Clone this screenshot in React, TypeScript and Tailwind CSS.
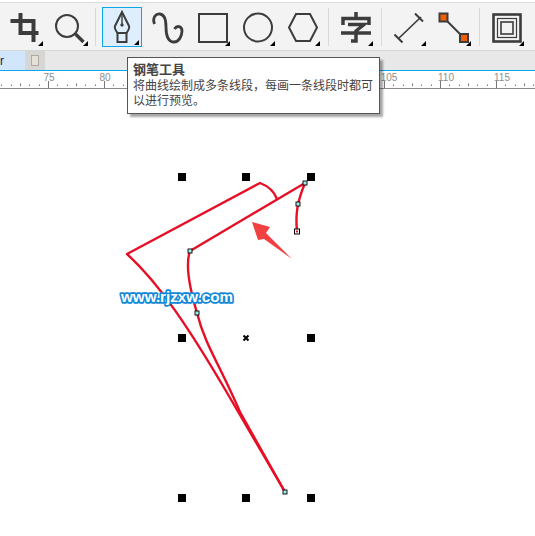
const sans = '"Liberation Sans", "Noto Sans CJK SC", sans-serif';

function Corner() {
  return <span className="absolute right-[2px] bottom-[1px] h-0 w-0 border-b-[5px] border-l-[5px] border-b-black border-l-transparent" />;
}

function Tool({ active, corner = true, children }: { active?: boolean; corner?: boolean; children: React.ReactNode }) {
  return (
    <div className="flex h-[48px] w-[45px] shrink-0 items-center justify-center">
      <div className={`relative flex h-[40px] w-[40px] items-center justify-center ${active ? 'border border-[#0ea5e9] bg-[#deeefc]' : ''}`}>
        <svg width="36" height="36" viewBox="0 0 36 36" fill="none" stroke="#3c3c3c" strokeWidth="2.4" className="shrink-0">
          {children}
        </svg>
        {corner && <Corner />}
      </div>
    </div>
  );
}

function Sep({ first }: { first?: boolean }) {
  return <div className={`mr-[3px] h-[38px] w-[1px] shrink-0 bg-[#d8d8d8] ${first ? 'ml-[3px]' : 'ml-[4px]'}`} />;
}

const rulerLabels = [
  { n: 75, x: 48 },
  { n: 80, x: 104 },
  { n: 105, x: 388 },
  { n: 110, x: 445 },
  { n: 115, x: 501 },
];

function Ruler() {
  const ticks = [];
  for (let i = -5; i < 54; i++) {
    const x = Math.round(48 + i * 9.33) + 0.5;
    const major = (i + 60) % 6 === 0;
    const mid = (i + 60) % 6 === 3;
    ticks.push(<line key={i} x1={x} x2={x} y1={major ? 10 : mid ? 12.5 : 13.5} y2={major ? 17 : 15} stroke="#777" strokeWidth="1" />);
  }
  return (
    <svg width="535" height="18" viewBox="0 0 535 18" className="block">
      {ticks}
      {rulerLabels.map((l) => (
        <text key={l.n} x={l.x + 1} y={10} textAnchor="middle" fontSize="10" fill="#8d8d8d" fontFamily={sans}>{l.n}</text>
      ))}
      <line x1="0" x2="535" y1="17.5" y2="17.5" stroke="#8a8a8a" strokeWidth="1" />
    </svg>
  );
}

function Handle({ x, y }: { x: number; y: number }) {
  return <rect x={x - 4} y={y - 4} width="8" height="8" fill="#000" />;
}

function Node({ x, y }: { x: number; y: number }) {
  return <rect x={x - 2} y={y - 2} width="4" height="4" fill="#9feee8" stroke="#000" strokeWidth="0.9" />;
}

export default function App() {
  return (
    <div className="relative h-[536px] w-[535px] overflow-hidden bg-white" style={{ fontFamily: sans }}>
      <div className="h-[3px] border-b border-[#dcdcdc] bg-white" />
      <div className="flex h-[48px] items-center border-b border-[#d6d6d6] bg-[#f3f3f3] pl-[2px]">
        <Tool>
          <path d="M13.5 4V24H31.5M3.5 12H26.5V33" strokeWidth="4" />
        </Tool>
        <Tool>
          <circle cx="15" cy="17" r="11" strokeWidth="2" />
          <path d="M23.5 25l8 8" strokeWidth="3.4" />
        </Tool>
        <Sep first />
        <Tool active>
          <path d="M18 3L25 17Q26 19 22.5 24H13.5Q10 19 11 17Z" strokeWidth="2" />
          <path d="M18 4v11" strokeWidth="1.4" />
          <circle cx="18" cy="16" r="1.2" fill="#3c3c3c" strokeWidth="1" />
          <rect x="13.5" y="24" width="9" height="9" strokeWidth="2" />
        </Tool>
        <Tool corner={false}>
          <path d="M5.5 15C3 8 7 4.5 11 5C15 5.5 17 11 17 18C17 26 19 33 25 33C30 33 33 27 33 22C33 17 28 16 25.5 20" strokeWidth="2.8" />
        </Tool>
        <Tool>
          <rect x="5" y="5" width="28" height="28" strokeWidth="2" />
        </Tool>
        <Tool>
          <circle cx="19" cy="18.5" r="14" strokeWidth="2" />
        </Tool>
        <Tool>
          <path d="M5 18.5L12 5H26L33 18.5L26 32H12Z" strokeWidth="2" />
        </Tool>
        <Sep />
        <Tool>
          <path d="M19 3v6M6 16V9.5H32V16M11 15.5H27L19 22V32H14M4 24H34" strokeWidth="3.5" />
        </Tool>
        <Sep />
        <Tool>
          <path d="M8 30L31 8" strokeWidth="1.7" />
          <path d="M25 4.5l8 8M4.5 25.5l8 8" strokeWidth="2" />
        </Tool>
        <Tool>
          <path d="M8 8l21 21" strokeWidth="2" />
          <rect x="4.5" y="4.5" width="8" height="8" fill="#f06000" strokeWidth="2" />
          <rect x="25" y="25" width="8" height="8" fill="#f06000" strokeWidth="2" />
        </Tool>
        <Sep />
        <Tool>
          <rect x="5.5" y="5.5" width="27" height="27" strokeWidth="2.6" />
          <rect x="9.5" y="9.5" width="19" height="19" strokeWidth="1.2" />
          <rect x="13" y="13" width="12" height="12" strokeWidth="1.6" />
        </Tool>
      </div>

      <div className="flex h-[19px] bg-[#e8e8e8]">
        <div className="flex w-[25px] items-center bg-[#d2e6fb] text-[12px] leading-none text-[#3b0f45]">r</div>
        <div className="flex w-[20px] items-center justify-center bg-[#d6d6d6]">
          <div className="h-[11px] w-[8px] border border-[#b3a99c] bg-[#e5e1da]" />
        </div>
      </div>
      <div className="h-[1px] bg-[#0aa8f0]" />
      <Ruler />

      <svg width="535" height="447" viewBox="0 89 535 447" className="block">
        <g fill="none" stroke="#e60f26" strokeWidth="2.4" strokeLinejoin="round">
          <path d="M305 183L190 251" />
          <path d="M277 199C274 191 268 186 260 183L127 254C160 284 190 330 226 391L285 492" />
          <path d="M190 251C186 262 188 283 197 313C205 345 220 365 240 412L285 492" />
          <path d="M305 183C298 200 295 213 297 231" />
        </g>
        <path d="M252 222L270 227L266 233L292 259L264 239L258 240Z" fill="#f34141" />
        <Handle x={182} y={177} />
        <Handle x={246} y={177} />
        <Handle x={311} y={177} />
        <Handle x={182} y={338} />
        <Handle x={311} y={338} />
        <Handle x={182} y={498} />
        <Handle x={246} y={498} />
        <Handle x={311} y={498} />
        <path d="M243.5 335.5l5 5M248.5 335.5l-5 5" stroke="#000" strokeWidth="2" />
        <Node x={305} y={183} />
        <Node x={298} y={204} />
        <Node x={190} y={251} />
        <Node x={197} y={313} />
        <Node x={285} y={492} />
        <rect x="294.5" y="229" width="5" height="5" fill="#fff" stroke="#000" strokeWidth="1" />
        <rect x="296" y="230.5" width="2" height="2" fill="#e60f26" />
        <text x="121" y="301.5" fontSize="15.2" fontWeight="700" fontFamily={sans} fill="#fff" stroke="#1488d8" strokeWidth="3.4" paintOrder="stroke" strokeLinejoin="round">www.rjzxw.com</text>
      </svg>

      <div className="absolute top-[57px] left-[127px] h-[57px] w-[253px] border border-[#555] bg-white px-[5px] pt-[4px] text-[12px] leading-[15px] text-[#444] shadow-[3px_3px_2px_rgba(0,0,0,0.35)]">
        <div className="mb-[2px] text-[13px] font-bold">钢笔工具</div>
        <div>将曲线绘制成多条线段，每画一条线段时都可</div>
        <div>以进行预览。</div>
      </div>
    </div>
  );
}
